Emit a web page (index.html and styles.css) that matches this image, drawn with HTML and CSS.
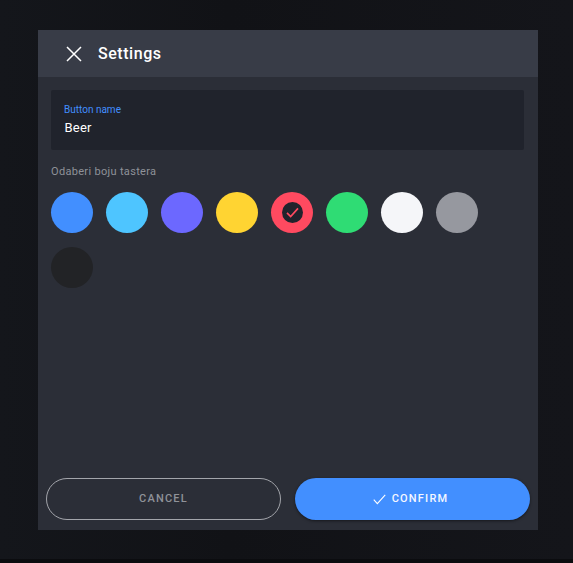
FILE: index.html
```html
<!DOCTYPE html>
<html lang="en">
<head>
    <meta charset="UTF-8">
    <meta name="viewport" content="width=device-width, initial-scale=1.0">
    <title>Settings</title>
    <link rel="stylesheet" href="styles.css">
</head>
<body>
    <div class="backdrop">
        <div class="modal">
            <div class="modal-header">
                <svg class="close-icon" width="16" height="16" viewBox="0 0 16 16">
                    <path d="M1 1L15 15M15 1L1 15" stroke="#fff" stroke-width="1.5" fill="none"/>
                </svg>
                <h2>Settings</h2>
            </div>
            <div class="modal-body">
                <div class="field">
                    <label>Button name</label>
                    <div class="field-value">Beer</div>
                </div>
                <p class="hint">Odaberi boju tastera</p>
                <div class="colors">
                    <div class="color blue"></div>
                    <div class="color sky"></div>
                    <div class="color violet"></div>
                    <div class="color yellow"></div>
                    <div class="color red">
                        <div class="tick">
                            <svg width="13" height="11" viewBox="0 0 14 12">
                                <path d="M1 6.5L5 10.5L13 1.5" stroke="#ff4a60" stroke-width="1.8" fill="none"/>
                            </svg>
                        </div>
                    </div>
                    <div class="color green"></div>
                    <div class="color white"></div>
                    <div class="color gray"></div>
                    <div class="color black"></div>
                </div>
            </div>
            <div class="modal-footer">
                <button class="btn cancel">CANCEL</button>
                <button class="btn confirm">
                    <svg width="13" height="11" viewBox="0 0 12 10">
                        <path d="M0.7 5.2L4 8.8L11.3 0.7" stroke="#fff" stroke-width="1" fill="none"/>
                    </svg>
                    CONFIRM
                </button>
            </div>
        </div>
    </div>
    <div class="bottom-strip"></div>
</body>
</html>
```

FILE: styles.css
```css
* {
    box-sizing: border-box;
}

body {
    font-family: Roboto, "Liberation Sans", sans-serif;
    margin: 0;
    height: 563px;
    overflow: hidden;
    background-color: #0b0c0f;
}

.backdrop {
    height: 559px;
    padding-top: 30px;
    background: linear-gradient(to right, #14161b, #111216 40%, #14151a);
}

.modal {
    width: 500px;
    height: 500px;
    margin-left: 38px;
    display: flex;
    flex-direction: column;
    background-color: #2b2e37;
}

.modal-header {
    height: 47px;
    flex-shrink: 0;
    display: flex;
    align-items: center;
    padding-left: 28px;
    background-color: #383c47;
}

.close-icon {
    margin-right: 16px;
}

.modal-header h2 {
    margin: 0;
    font-size: 16px;
    font-weight: 500;
    letter-spacing: 0.55px;
    color: #fff;
}

.modal-body {
    flex: 1;
    padding: 13px 14px 0 13px;
}

.field {
    height: 60px;
    padding: 14px 13px 0;
    border-radius: 2px;
    background-color: #20232c;
}

.field label {
    display: block;
    font-size: 10px;
    line-height: 12px;
    color: #428fff;
}

.field-value {
    margin-top: 3px;
    margin-left: 0.5px;
    font-size: 13px;
    line-height: 17px;
    letter-spacing: 0.2px;
    color: #fff;
}

.hint {
    margin: 14px 0 13px;
    font-size: 11px;
    line-height: 15px;
    letter-spacing: 0.32px;
    color: #8f9299;
}

.colors {
    display: flex;
    flex-wrap: wrap;
    gap: 14px 13px;
}

.color {
    width: 42px;
    height: 41px;
    border-radius: 50%;
    display: flex;
    align-items: center;
    justify-content: center;
}

.blue { background-color: #428fff; }
.sky { background-color: #4ec5ff; }
.violet { background-color: #6c68ff; }
.yellow { background-color: #ffd432; }
.red { background-color: #ff4a60; }
.green { background-color: #2fdc74; }
.white { background-color: #f5f6f9; }
.gray { background-color: #96989f; }
.black { background-color: #222326; }

.tick {
    width: 21px;
    height: 21px;
    border-radius: 50%;
    display: flex;
    align-items: center;
    justify-content: center;
    background-color: #20232c;
}

.modal-footer {
    display: flex;
    justify-content: space-between;
    padding: 0 8px 10px;
}

.btn {
    width: 235px;
    height: 42px;
    padding-bottom: 2px;
    border-radius: 21px;
    font-family: inherit;
    font-size: 11px;
    font-weight: 500;
    letter-spacing: 1.2px;
    display: flex;
    align-items: center;
    justify-content: center;
    gap: 6px;
}

.cancel {
    background: transparent;
    border: 1px solid #a3a5ab;
    color: #8f9299;
}

.confirm {
    border: none;
    padding-right: 10px;
    background-color: #428fff;
    color: #f5f7ff;
    box-shadow: 0 1px 3px rgba(0, 0, 0, 0.5);
}

.confirm svg {
    margin-top: 2px;
}
```
